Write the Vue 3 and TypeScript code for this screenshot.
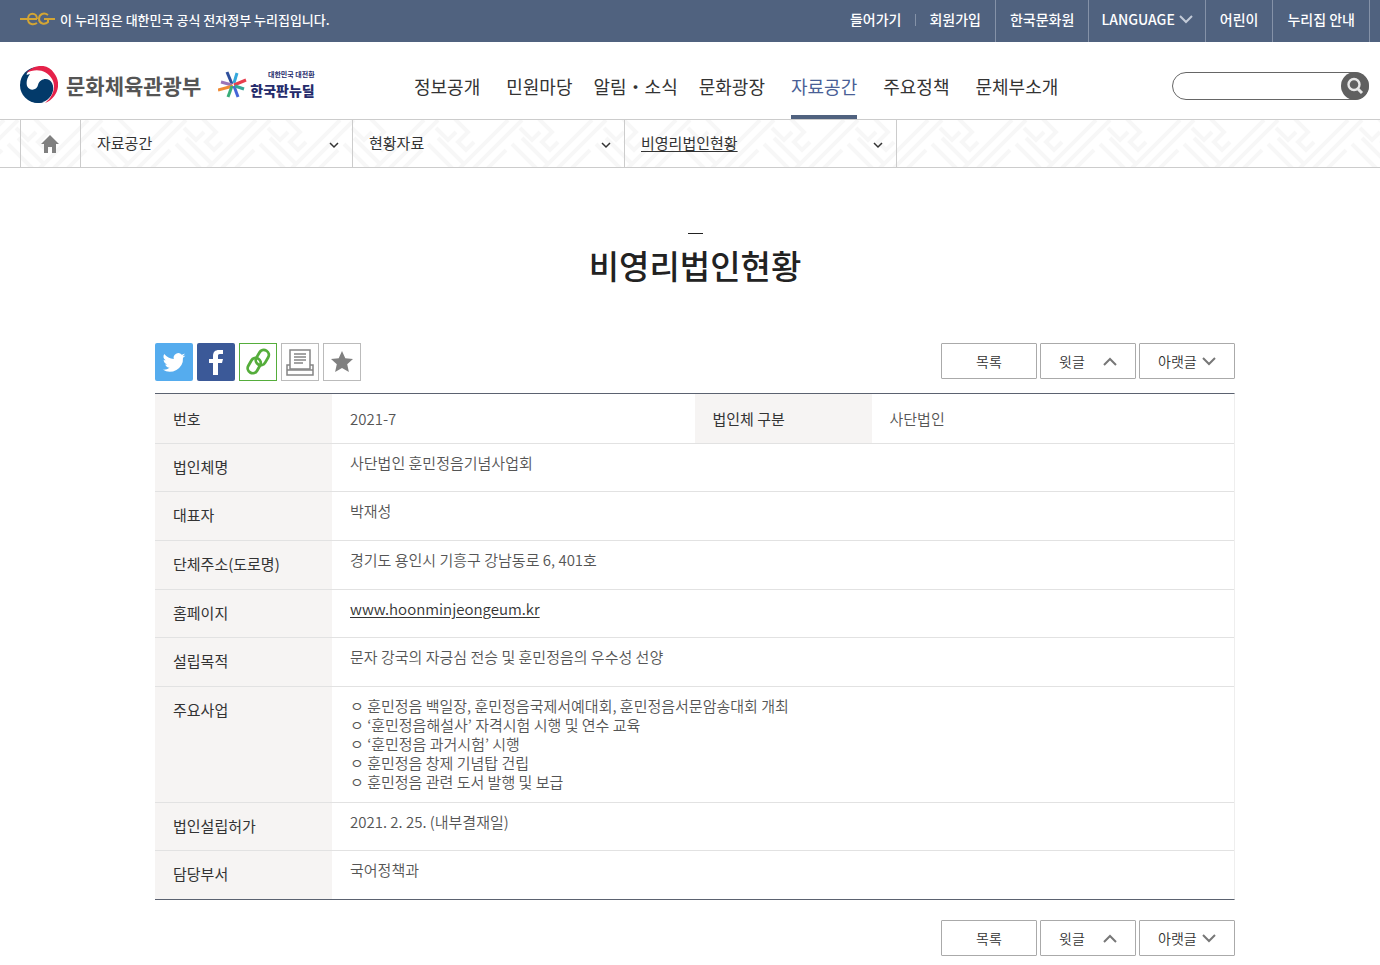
<script setup lang="ts">
interface Row { label: string; lines: string[]; href?: string }

const menu: { label: string; active?: boolean; tight?: boolean }[] = [
  { label: '정보공개' },
  { label: '민원마당' },
  { label: '알림・소식', tight: true },
  { label: '문화광장' },
  { label: '자료공간', active: true },
  { label: '주요정책' },
  { label: '문체부소개' },
]
const crumbs = [
  { label: '자료공간', current: false },
  { label: '현황자료', current: false },
  { label: '비영리법인현황', current: true },
]
const rows: Row[] = [
  { label: '법인체명', lines: ['사단법인 훈민정음기념사업회'] },
  { label: '대표자', lines: ['박재성'] },
  { label: '단체주소(도로명)', lines: ['경기도 용인시 기흥구 강남동로 6, 401호'] },
  { label: '홈페이지', lines: ['www.hoonminjeongeum.kr'], href: '#homepage' },
  { label: '설립목적', lines: ['문자 강국의 자긍심 전승 및 훈민정음의 우수성 선양'] },
  {
    label: '주요사업',
    lines: [
      'ㅇ 훈민정음 백일장, 훈민정음국제서예대회, 훈민정음서문암송대회 개최',
      'ㅇ ‘훈민정음해설사’ 자격시험 시행 및 연수 교육',
      'ㅇ ‘훈민정음 과거시험’ 시행',
      'ㅇ 훈민정음 창제 기념탑 건립',
      'ㅇ 훈민정음 관련 도서 발행 및 보급',
    ],
  },
  { label: '법인설립허가', lines: ['2021. 2. 25. (내부결재일)'] },
  { label: '담당부서', lines: ['국어정책과'] },
]
const pagers = ['top', 'bottom']
</script>

<template>
  <div class="page">
    <div class="topbar">
      <div class="official">
        <svg class="eg" viewBox="0 0 36 16" aria-hidden="true">
          <g fill="none" stroke="#d3a534" stroke-width="2">
            <path d="M0 8h17M8 8c0-7 9-7 9 0M8 8c0 6 6 6 9 4" />
            <path d="M28 4c-4-3-9-1-9 4s6 6 9 3V8h7M24 8h6" />
          </g>
        </svg>
        <span>이 누리집은 대한민국 공식 전자정부 누리집입니다.</span>
      </div>
      <nav class="util" aria-label="이용 안내">
        <a href="#login" class="plain">들어가기</a>
        <a href="#join" class="divided">회원가입</a>
        <a href="#center">한국문화원</a>
        <button type="button">LANGUAGE
          <svg width="14" height="10" viewBox="0 0 14 10" aria-hidden="true"><path d="M1 2l6 6 6-6" fill="none" stroke="#c3cbd8" stroke-width="2" /></svg>
        </button>
        <a href="#kids">어린이</a>
        <a href="#guide">누리집 안내</a>
      </nav>
    </div>

    <header class="header">
      <div class="brands">
        <a href="#home" class="ministry">
          <svg width="38" height="38" viewBox="0 0 38 38" aria-hidden="true">
            <circle cx="18" cy="19" r="18" fill="#033a6a" />
            <path d="M7 7C14 0 27 0 33 9c6 10 2 22-8 28L12 30 5 18z" fill="#fff" />
            <path d="M3 10C-2 23 6 37 19 37c11-1 17-12 13-20-3-6-12-5-14 2-1 5-8 7-11 1-1-4 0-8 3-12z" fill="#033a6a" />
            <path d="M6 7C14-2 28-3 34 7c8 10 4 25-9 30 9-7 11-17 7-24C27 4 16 2 6 7z" fill="#e5224a" />
          </svg>
          <span>문화체육관광부</span>
        </a>
        <a href="#newdeal" class="newdeal">
          <svg width="30" height="28" viewBox="0 0 30 28" aria-hidden="true">
            <g fill="none" stroke-width="3">
              <path d="M9 1l5 12" stroke="#2e4f9c" />
              <path d="M19 2l-3 10" stroke="#35a8dc" />
              <path d="M3 11l11 3" stroke="#9b75b8" />
              <path d="M0 19l15-4" stroke="#f08a34" />
              <path d="M28 9l-12 5" stroke="#e83e4d" />
              <path d="M14 15l-4 11" stroke="#38ad78" />
              <path d="M16 15l4 11" stroke="#4565d8" />
              <path d="M17 15l9 3" stroke="#36a697" />
            </g>
          </svg>
          <span class="deal-text"><small>대한민국 대전환</small><strong>한국판뉴딜</strong></span>
        </a>
      </div>
      <nav class="menu" aria-label="주 메뉴">
        <a v-for="m in menu" :key="m.label" href="#menu" :class="{ active: m.active, tight: m.tight }"><span>{{ m.label }}</span></a>
      </nav>
      <form class="search" role="search" @submit.prevent>
        <input type="search" aria-label="검색어" />
        <button type="submit" aria-label="검색">
          <svg width="28" height="28" viewBox="0 0 28 28" aria-hidden="true"><circle cx="13" cy="12.5" r="5.5" fill="none" stroke="#e8e8e8" stroke-width="2.4" /><path d="M17 17l4 4" stroke="#e8e8e8" stroke-width="3" /></svg>
        </button>
      </form>
    </header>

    <nav class="crumbs" aria-label="현재 위치">
      <svg class="weave" aria-hidden="true">
        <defs>
          <pattern id="lattice" width="84" height="48" patternUnits="userSpaceOnUse">
            <path d="M38 50L88 0M52 50L102 0M-32 50L18 0M-46 50L4 0M66 50L86 30M-18 50L2 30M8 24l26 26M18 18l26 26M16 8l12 12 8-8M34-2l14 14-10 10 8 8 8-8" fill="none" stroke="#f7f7f7" stroke-width="4" />
          </pattern>
        </defs>
        <rect width="100%" height="100%" fill="url(#lattice)" />
      </svg>
      <a class="home" href="#home" aria-label="홈">
        <svg width="20" height="18" viewBox="0 0 20 18" aria-hidden="true"><path d="M9 0l9 9h-3v9h-4v-6H7v6H3V9H0z" fill="#808080" /></svg>
      </a>
      <button v-for="c in crumbs" :key="c.label" type="button" class="crumb">
        <span :class="{ current: c.current }">{{ c.label }}</span>
        <svg width="10" height="12" viewBox="0 0 10 12" aria-hidden="true"><path d="M1 6l4 4 4-4" fill="none" stroke="#333" stroke-width="1.5" /></svg>
      </button>
    </nav>

    <main class="main">
      <h1>비영리법인현황</h1>
      <template v-for="p in pagers" :key="p">
        <div class="tools">
          <div v-if="p === 'top'" class="share">
            <button type="button" class="tw" aria-label="트위터">
              <svg viewBox="0 0 24 24" width="26" height="26"><path fill="#fff" d="M22.500 5.900c-.8.3-1.600.6-2.500.7.9-.5 1.600-1.400 1.900-2.400-.8.5-1.800.9-2.700 1.100a4.300 4.300 0 0 0-7.400 3.900A12.200 12.200 0 0 1 3 4.700a4.300 4.300 0 0 0 1.300 5.700c-.7 0-1.400-.2-1.900-.5 0 2.100 1.400 3.800 3.400 4.300-.6.2-1.300.2-1.900.1.500 1.700 2.100 2.900 4 3A8.700 8.700 0 0 1 1.500 19a12.200 12.200 0 0 0 18.800-10.900c.9-.6 1.600-1.300 2.200-2.200z" /></svg>
            </button>
            <button type="button" class="fb" aria-label="페이스북">
              <svg viewBox="0 0 38 38" width="38" height="38"><path fill="#fff" d="M16 32V20h-4v-4h4v-3c0-4 2-6 6-6h4v4h-3c-2 0-2 1-2 2v3h5l-1 4h-4v12z" /></svg>
            </button>
            <button type="button" class="link" aria-label="주소 복사">
              <svg viewBox="0 0 36 36" width="36" height="36"><g fill="none" stroke="#55ad3b" stroke-width="2.800" transform="rotate(30 18 18)"><rect x="14.500" y="4" width="10" height="16" rx="5" /><rect x="11.500" y="15" width="10" height="16" rx="5" /></g></svg>
            </button>
            <button type="button" class="print" aria-label="인쇄">
              <svg viewBox="0 0 36 36" width="36" height="36"><g fill="none" stroke="#858585" stroke-width="1.500"><path d="M8 21H5v10h26V21h-3" /><path d="M8 25V6h20v19z" /><path d="M12 10h12M12 13h12M12 16h12M12 19h9M5 26h26" /></g></svg>
            </button>
            <button type="button" class="star" aria-label="즐겨찾기">
              <svg viewBox="0 0 24 24" width="24" height="24"><path fill="#808080" d="M12 1l3.300 7.200 7.700.8-5.800 5.200L18.900 22 12 18l-6.900 4 1.700-7.800L1 9l7.700-.8z" /></svg>
            </button>
          </div>
          <div class="pager">
            <button type="button">목록</button>
            <button type="button" class="step">윗글<svg width="14" height="10" viewBox="0 0 14 10" aria-hidden="true"><path d="M1 9l6-6 6 6" /></svg></button>
            <button type="button" class="step">아랫글<svg width="14" height="10" viewBox="0 0 14 10" aria-hidden="true"><path d="M1 2l6 6 6-6" /></svg></button>
          </div>
        </div>
        <table v-if="p === 'top'">
          <colgroup><col class="label-col" /><col /><col class="label-col" /><col /></colgroup>
          <tbody>
            <tr class="first">
              <th scope="row">번호</th><td>2021-7</td>
              <th scope="row">법인체 구분</th><td>사단법인</td>
            </tr>
            <tr v-for="r in rows" :key="r.label">
              <th scope="row">{{ r.label }}</th>
              <td colspan="3">
                <a v-if="r.href" :href="r.href">{{ r.lines[0] }}</a>
                <template v-else><div v-for="l in r.lines" :key="l">{{ l }}</div></template>
              </td>
            </tr>
          </tbody>
        </table>
      </template>
    </main>
  </div>
</template>

<style>
body { margin: 0; background: #fff; }
</style>

<style scoped>
.page, button, input { font-family: "Noto Sans CJK KR", sans-serif; }
.page { color: #333; font-size: 15px; overflow-x: hidden; }
* { box-sizing: border-box; }
a { color: inherit; text-decoration: none; }
button { margin: 0; padding: 0; border: 0; background: none; color: inherit; cursor: pointer; }
svg { flex: none; }

.topbar { display: flex; justify-content: space-between; height: 42px; padding: 0 10px 0 20px; background: #50627f; color: #fff; }
.official { display: flex; align-items: center; gap: 4px; padding-bottom: 4px; font-size: 13px; font-weight: 500; }
.eg { width: 36px; height: 16px; }
.util { display: flex; line-height: 20px; }
.util a, .util button { display: flex; align-items: center; gap: 4px; padding: 0 14px 5px; border-right: 1px solid #8592a8; font-size: 14px; font-weight: 500; }
.util button { padding: 0 12px 5px; }
.util .plain { border-right: 0; }
.divided { position: relative; }
.divided::before { content: ""; position: absolute; left: 0; top: 14px; width: 1px; height: 12px; background: #8592a8; }

.header { display: flex; height: 78px; padding: 0 11px 0 20px; border-bottom: 1px solid #ccc; }
.brands { display: flex; align-items: center; gap: 17px; flex: 0 0 381px; padding-top: 8px; }
.ministry { display: flex; align-items: center; gap: 8px; color: #555; font-size: 21px; font-weight: 700; line-height: 32px; }
.newdeal { display: flex; align-items: center; gap: 2px; color: #252b6b; }
.deal-text { display: flex; flex-direction: column; align-items: flex-end; }
.deal-text small { font-size: 7px; line-height: 11px; font-weight: 700; }
.deal-text strong { font-size: 14px; line-height: 20px; font-weight: 900; }
.menu { display: flex; font-size: 18px; font-weight: 400; }
.menu a { display: flex; padding: 0 13px; }
.menu a.tight { padding: 0 8px; }
.menu span { display: flex; align-items: center; padding-top: 14px; border-bottom: 4px solid transparent; white-space: nowrap; }
.menu .active span { color: #4a5f96; border-color: #50627f; }
.search { display: flex; align-items: center; margin-left: auto; padding-top: 10px; }
.search input { width: 197px; height: 28px; padding: 0 32px 0 12px; border: 1px solid #666; border-radius: 14px; outline: 0; font-size: 14px; }
.search button { display: flex; width: 28px; height: 28px; margin-left: -28px; border-radius: 50%; background: #606060; }

.crumbs { position: relative; display: flex; height: 48px; padding-left: 20px; border-bottom: 1px solid #ccc; background: #fff; }
.weave { position: absolute; inset: 0; width: 100%; height: 100%; }
.home, .crumb { position: relative; display: flex; align-items: center; border-right: 1px solid #ccc; }
.home { width: 61px; justify-content: center; border-left: 1px solid #ccc; }
.crumb { flex: 0 1 272px; justify-content: space-between; padding: 0 13px 2px 16px; font-size: 15px; }
.current { text-decoration: underline; text-underline-offset: 2px; }

.main { max-width: 1110px; margin: 0 auto; padding: 65px 10px 10px 20px; }
h1 { display: flex; flex-direction: column; align-items: center; margin: 0 0 54px; color: #222; font-size: 33px; line-height: 48px; font-weight: 500; }
h1::before { content: ""; width: 15px; height: 1px; margin-bottom: 7px; background: #222; }
.tools { display: flex; height: 37px; }
.share { display: flex; gap: 4px; }
.share button { display: flex; align-items: center; justify-content: center; width: 38px; height: 38px; border: 1px solid #bbb; }
.share .tw { border: 0; border-radius: 2px; background: #55acee; }
.share .fb { border: 0; border-radius: 2px; background: #3b5998; }
.share .link { border-color: #55ad3b; }
.pager { display: flex; gap: 3px; margin-left: auto; }
.pager button { width: 96px; height: 36px; border: 1px solid #aaa; border-radius: 1px; background: #fff; font-size: 14px; font-weight: 350; }
.pager .step { display: flex; align-items: center; justify-content: space-between; padding: 0 18px; }
.step path { fill: none; stroke: #777; stroke-width: 2; }

table { width: 100%; margin: 13px 0 20px; border-collapse: separate; border-spacing: 0; table-layout: fixed; border-top: 1px solid #5b6270; border-bottom: 1px solid #5b6270; border-right: 1px solid #eee; line-height: 19px; }
.label-col { width: 177px; }
tr { height: 49px; }
tr:nth-child(3n+2), tr:last-child { height: 48px; }
tr.first { height: 50px; }
th, td { border-bottom: 1px solid #e2e2e2; text-align: left; vertical-align: top; font-size: 15px; }
th { padding: 13px 18px; background: #f6f4f3; color: #333; font-weight: 400; }
td { padding: 9px 18px 11px; color: #555; font-weight: 350; }
.first th, .first td { padding: 14px 18px; vertical-align: middle; }
tr:last-child th, tr:last-child td { border-bottom: 0; }
td a { color: #333; text-decoration: underline; text-underline-offset: 2px; }
</style>
